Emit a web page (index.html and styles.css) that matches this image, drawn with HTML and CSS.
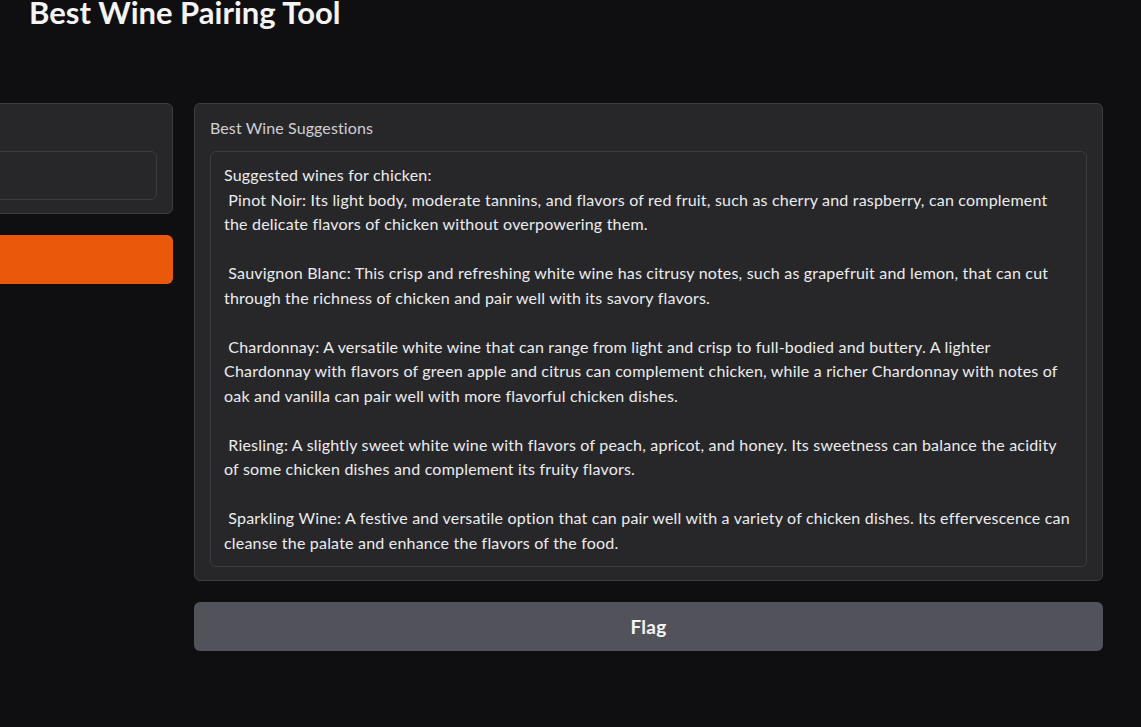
FILE: index.html
```html
<!DOCTYPE html>
<html lang="en">
<head>
<meta charset="utf-8">
<title>Best Wine Pairing Tool</title>
<link rel="stylesheet" href="styles.css">
</head>
<body>
<div class="app">
  <h1 class="title">Best Wine Pairing Tool</h1>
  <div class="row">
    <div class="col col-left">
      <div class="block">
        <label class="label">food</label>
        <div class="input"></div>
      </div>
      <button class="btn btn-primary">Submit</button>
    </div>
    <div class="col col-right">
      <div class="block block-out">
        <span class="label">Best Wine Suggestions</span>
        <div class="output">Suggested wines for chicken:
 Pinot Noir: Its light body, moderate tannins, and flavors of red fruit, such as cherry and raspberry, can complement the delicate flavors of chicken without overpowering them.

 Sauvignon Blanc: This crisp and refreshing white wine has citrusy notes, such as grapefruit and lemon, that can cut through the richness of chicken and pair well with its savory flavors.

 Chardonnay: A versatile white wine that can range from light and crisp to full-bodied and buttery. A lighter Chardonnay with flavors of green apple and citrus can complement chicken, while a richer Chardonnay with notes of oak and vanilla can pair well with more flavorful chicken dishes.

 Riesling: A slightly sweet white wine with flavors of peach, apricot, and honey. Its sweetness can balance the acidity of some chicken dishes and complement its fruity flavors.

 Sparkling Wine: A festive and versatile option that can pair well with a variety of chicken dishes. Its effervescence can cleanse the palate and enhance the flavors of the food.</div>
      </div>
      <button class="btn btn-secondary">Flag</button>
    </div>
  </div>
</div>
</body>
</html>
```
FILE: styles.css
```css
html, body {
  margin: 0;
  padding: 0;
  background: #0f0f11;
  overflow: hidden;
}
body {
  width: 1141px;
  height: 727px;
  font-family: Lato, "Noto Sans", sans-serif;
  color: #e4e4e7;
}
.app {
  display: flex;
  flex-direction: column;
}
.title {
  margin: -8px 0 0 29px;
  font-size: 31px;
  line-height: 40px;
  font-weight: 700;
  color: #f4f4f5;
  letter-spacing: 0;
}
.row {
  display: flex;
  gap: 21px;
  margin-top: 71px;
  margin-left: -127px;
  align-items: flex-start;
}
.col {
  display: flex;
  flex-direction: column;
  gap: 21px;
}
.col-left { width: 300px; }
.col-right { width: 909px; }
.block {
  background: #27272a;
  border: 1px solid #3c3c42;
  border-radius: 6px;
  padding: 13px 15px 13px 15px;
  display: flex;
  flex-direction: column;
}
.label {
  font-size: 16px;
  line-height: 22px;
  letter-spacing: 0.1px;
  color: #cfcfd4;
  margin-bottom: 12px;
}
.col-left .label { visibility: hidden; }
.input {
  box-sizing: border-box;
  height: 49px;
  border: 1px solid #3c3c42;
  border-radius: 6px;
  background: #27272a;
}
.output {
  border: 1px solid #3c3c42;
  border-radius: 6px;
  background: #27272a;
  padding: 11px 13px 11px 13px;
  font-size: 16px;
  letter-spacing: 0.2px;
  line-height: 24.5px;
  white-space: pre-wrap;
  color: #ececef;
}
.btn {
  height: 49px;
  border: none;
  border-radius: 6px;
  font-family: inherit;
  font-size: 19px;
  letter-spacing: 0.3px;
  font-weight: 700;
  color: #f4f4f5;
}
.btn-primary {
  background: #ea580c;
  color: #ea580c;
}
.btn-secondary {
  background: #52525b;
}
```
